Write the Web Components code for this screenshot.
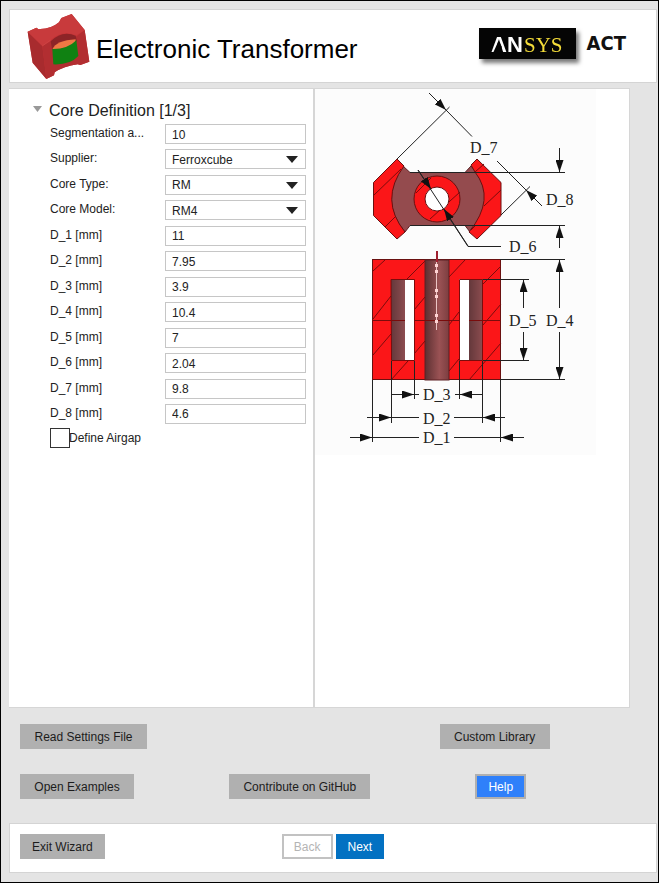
<!DOCTYPE html>
<html lang="en">
<head>
<meta charset="utf-8">
<title>Electronic Transformer</title>
<style>
html, body { margin: 0; }
body { font-family: "Liberation Sans", Arial, sans-serif; font-size: 12px; color: #222; }
</style>
</head>
<body>
<wizard-app></wizard-app>
<script>
const define = (name, html, setup) => {
  const template = document.createElement('template');
  template.innerHTML = html;
  customElements.define(name, class extends HTMLElement {
    constructor() {
      super();
      this.attachShadow({ mode: 'open' }).append(template.content.cloneNode(true));
    }
    connectedCallback() { if (setup) setup(this, this.shadowRoot); }
  });
};

define('wizard-button', `
<style>
:host { display: inline-flex; }
button { flex: 1; height: 25px; padding: 0 10px; border: 2px solid #b0b0b0; background: #b0b0b0; color: #1c1c1c; font: inherit; line-height: 16px; white-space: nowrap; }
:host([kind="help"]) button { background: #2f80fa; color: #fff; }
:host([kind="next"]) button { background: #0371c2; border-color: #0371c2; color: #fff; }
:host([kind="back"]) button { background: #fff; border-color: #c2c2c2; color: #b4b4b4; }
</style>
<button type="button"><slot></slot></button>`, (host, root) => {
  root.querySelector('button').disabled = host.hasAttribute('disabled');
});

define('core-logo', `
<style>:host { display: block; } svg { display: block; }</style>
<svg width="64" height="66" viewBox="20 12 192 198" aria-hidden="true">
<path fill="#c43437" d="M22 68 48 56 54 60Q90 62 116 40L123 27 154 15 193 63 207 158 180 168 172 166Q130 172 103 190L101 199 78 210 37 161Z"/>
<path fill="#a82b2e" d="M22 68 66 111 78 210 37 161Z"/>
<path fill="#b22e31" d="M66 111 92 97Q130 60 166 84L193 63 207 158 180 168 172 166Q130 172 103 190L101 199 78 210Z"/>
<path fill="#c83a3c" d="M22 68 48 56 54 60Q90 62 116 40L123 27 154 15 193 63 168 79Q124 62 91 93L66 111Z"/>
<path fill="#8c2427" d="M91 97Q126 63 166 80L170 97 96 124Z"/>
<path fill="#ee7844" d="M96 121Q108 94 166 91Q169 105 135 116Q113 123 96 121Z"/>
<path fill="#108112" d="M96 120Q142 121 168 94L174 141Q150 168 99 166Z"/>
<path fill="none" stroke="#d04a48" stroke-width="2" d="M66 111 91 93"/>
</svg>`);

define('vendor-logo', `
<style>
:host { display: flex; align-items: center; gap: 11px; }
svg { display: block; filter: drop-shadow(3px 4px 2px #0008); }
.word { font: bold 22px "Liberation Sans", sans-serif; fill: #fff; }
.tail { font: 21px "Liberation Serif", serif; fill: #f4dc39; }
b { font: bold 20px "DejaVu Sans Condensed", sans-serif; color: #111; }
</style>
<svg width="97" height="31" viewBox="0 0 97 31">
<rect width="97" height="31" fill="#050505"/>
<text class="word" x="12" y="24">AN</text>
<path d="M19.500 13 14 25H21.500L23 19Z" fill="#050505"/>
<text class="tail" x="45" y="24">SYS</text>
</svg>
<b>ACT</b>`);

define('page-header', `
<style>
:host { display: flex; align-items: center; gap: 5px; padding: 3px 30px 3px 17px; background: #fff; border: 1px solid #d4d4d4; }
h1 { flex: 1; margin: 0; padding-top: 6px; font-size: 26px; font-weight: 400; line-height: 30px; color: #000; white-space: nowrap; }
vendor-logo { padding-bottom: 6px; }
</style>
<core-logo></core-logo><h1><slot></slot></h1><vendor-logo></vendor-logo>`);

define('form-field', `
<style>
:host { display: grid; grid-template-columns: 115px 1fr; align-items: center; }
label { line-height: 16px; padding-bottom: 2px; white-space: nowrap; }
.box { display: grid; position: relative; min-width: 0; }
input, select { box-sizing: border-box; width: 100%; height: 20px; margin: 0; padding: 1px 6px 0; border: 1px solid #c6c6c6; border-radius: 0; background: #fff; color: #222; font: inherit; appearance: none; }
svg { position: absolute; right: 8px; top: 7px; pointer-events: none; }
</style>
<label for="control"></label><div class="box"></div>`, (host, root) => {
  root.querySelector('label').textContent = host.getAttribute('label');
  const value = host.getAttribute('value');
  root.querySelector('.box').innerHTML = host.hasAttribute('choice')
    ? `<select id="control"><option>${value}</option></select><svg width="12" height="7" viewBox="0 0 12 7"><path d="M0 0H12L6 7Z" fill="#222"/></svg>`
    : `<input id="control" type="text" value="${value}">`;
});

define('check-field', `
<style>
:host { display: flex; align-items: center; }
input { appearance: none; box-sizing: border-box; width: 20px; height: 20px; margin: 0; border: 1px solid #333; background: #fff; }
input:checked { background: #0371c2; }
label { margin-left: -1px; line-height: 16px; }
</style>
<input type="checkbox" id="check"><label for="check"><slot></slot></label>`);

define('core-form', `
<style>
:host { display: block; padding: 12px 7px 0 23px; background: #fff; }
.title { display: flex; align-items: center; gap: 6px; }
h2 { margin: 0; font-size: 16px; font-weight: 400; line-height: 20px; white-space: nowrap; }
.toggle { display: flex; width: 11px; height: 20px; padding: 5px 1px 0; border: 0; background: none; }
.fields { display: flex; flex-direction: column; justify-content: space-between; min-height: 300px; padding: 3px 0 4px 18px; }
check-field { padding-left: 18px; }
</style>
<div class="title"><button class="toggle" type="button" aria-label="Collapse"><svg width="9" height="6" viewBox="0 0 9 6"><path d="M0 0H9L4.500 6Z" fill="#999"/></svg></button><h2>Core Definition [1/3]</h2></div>
<div class="fields">
<form-field label="Segmentation a..." value="10"></form-field>
<form-field label="Supplier:" value="Ferroxcube" choice></form-field>
<form-field label="Core Type:" value="RM" choice></form-field>
<form-field label="Core Model:" value="RM4" choice></form-field>
<form-field label="D_1 [mm]" value="11"></form-field>
<form-field label="D_2 [mm]" value="7.95"></form-field>
<form-field label="D_3 [mm]" value="3.9"></form-field>
<form-field label="D_4 [mm]" value="10.4"></form-field>
<form-field label="D_5 [mm]" value="7"></form-field>
<form-field label="D_6 [mm]" value="2.04"></form-field>
<form-field label="D_7 [mm]" value="9.8"></form-field>
<form-field label="D_8 [mm]" value="4.6"></form-field>
</div>
<check-field>Define Airgap</check-field>`);

define('core-diagram', `
<style>
:host { display: block; background: #fff; }
svg { display: block; width: 281px; max-width: 100%; background: #fcfcfc; }
text { font: 16px "Liberation Serif", "Times New Roman", serif; fill: #222; }
.cut { fill: #fb1618; stroke: #6a1010; }
.hatch { fill: none; stroke: #7a0c0c; }
.back { fill: #944b4e; stroke: #5c2024; }
.dim { fill: none; stroke: #222; }
</style>
<svg viewBox="315 89 281 366" role="img" aria-label="Core dimensions">
<defs>
<marker id="tip" viewBox="0 0 12 8" refX="12" refY="4" markerWidth="12" markerHeight="8" orient="auto-start-reverse" markerUnits="userSpaceOnUse"><path d="M0 0 12 4 0 8Z" fill="#111"/></marker>
<linearGradient id="bore"><stop offset="0" stop-color="#5c3032"/><stop offset=".6" stop-color="#9a5254"/><stop offset="1" stop-color="#7c3e40"/></linearGradient>
<linearGradient id="wall"><stop offset="0" stop-color="#64383b"/><stop offset="1" stop-color="#8d4d50"/></linearGradient>
</defs>
<path class="back" d="M403 166 410 172.500H465L471 166Q500 199 470 232L465 225.500H410L405 232Q378 199 403 166Z"/>
<path class="cut" d="M397 159 373.500 182.500V215.500L397 239 405 232Q379 200 404 166Z"/>
<path class="cut" d="M477 159 501 182.500V215.500L477 239 469 232Q496 199 475 172L471 165Z"/>
<path class="hatch" d="M374 195 401 169M385 227 395 217M475 172 484 164M484 206 501 190M471 230 475 226"/>
<circle class="cut" cx="437" cy="199" r="23"/>
<path class="hatch" d="M416 193 431 178M430 219 460 192"/>
<circle cx="437" cy="199" r="12" fill="#fff" stroke="#6a1010"/>
<g class="dim">
<path d="M397 159 449.500 107M446 110 472 136.500M497 161 526 190M501 215 530 186.500M410 172.500H565M410 225.500H565M418 170 468 246.500H501"/>
<path marker-end="url(#tip)" d="M429 93 446 110"/><path marker-end="url(#tip)" d="M542 206 526 190"/>
<path marker-end="url(#tip)" d="M559.500 148V172"/><path marker-end="url(#tip)" d="M559.500 248V226"/>
<path marker-end="url(#tip)" d="M418 170 431 189"/><path marker-end="url(#tip)" d="M468 246 444 209"/>
</g>
<rect class="cut" x="372.500" y="259.500" width="128" height="120"/>
<rect x="425" y="260" width="24" height="120" fill="url(#bore)" stroke="#5c2024"/>
<path class="hatch" d="M373 271 385 260M406 280 425 261M373 319 391 296M373 355 391 334M391 380 408 361M414 310 425 297M414 354 425 341M449 277 465 260M449 325 459 312M449 371 459 359M483 284 501 266M483 325 501 304M469 380 501 343"/>
<path fill="url(#wall)" d="M391 279H405V360H391Z"/><path fill="url(#wall)" d="M469 279H483V360H469Z"/>
<path fill="#fff" d="M405 279H414V360H405ZM459 279H469V360H459Z"/>
<path class="hatch" d="M391 279.500H414.500V360.500H391.500ZM459.500 279.500H482.500V360.500H459.500ZM372 320.500H405M414 320.500H459M469 320.500H501"/>
<path stroke="#a02030" stroke-width="2" d="M437 251V262"/>
<path stroke="#ecc5c5" d="M436.500 262V330"/><path stroke="#ffd3d3" stroke-width="3" stroke-dasharray="3 3 3 16" d="M436.500 264V325"/>
<g class="dim">
<path d="M372.500 380V442M391.500 361V423M414.500 361V399M459.500 361V399M482.500 361V423M500.500 380V442M500 259.500H565M500 379.500H565M483 279.500H529M483 360.500H529M414 394.500H419M455 394.500H459M391 417.500H419M454 417.500H483M373 437.500H419M454 437.500H501"/>
<path marker-end="url(#tip)" d="M391 394.500H414"/><path marker-end="url(#tip)" d="M483 394.500H460"/>
<path marker-end="url(#tip)" d="M367 417.500H391"/><path marker-end="url(#tip)" d="M505 417.500H483"/>
<path marker-end="url(#tip)" d="M350 437.500H372"/><path marker-end="url(#tip)" d="M524 437.500H501"/>
<path marker-end="url(#tip)" d="M523.500 308V280"/><path marker-end="url(#tip)" d="M523.500 332V360"/>
<path marker-end="url(#tip)" d="M559.500 308V260"/><path marker-end="url(#tip)" d="M559.500 332V379"/>
</g>
<text x="470" y="153">D_7</text><text x="546" y="205">D_8</text><text x="509" y="252">D_6</text>
<text x="509" y="326">D_5</text><text x="546" y="326">D_4</text>
<text x="423" y="400">D_3</text><text x="423" y="424">D_2</text><text x="423" y="443">D_1</text>
</svg>`);

define('action-bar', `
<style>
:host { display: grid; grid-template-columns: 209fr 210fr 122fr 95fr; row-gap: 25px; justify-items: start; }
.read, .open { grid-column: 1; }
.git { grid-column: 2; }
.wide, .help { grid-column: 3; }
.read { min-width: 127px; } .wide { min-width: 110px; } .open { min-width: 114px; } .git { min-width: 141px; }
.help { min-width: 51px; justify-self: center; }
</style>
<wizard-button class="read">Read Settings File</wizard-button>
<wizard-button class="wide">Custom Library</wizard-button>
<wizard-button class="open">Open Examples</wizard-button>
<wizard-button class="git">Contribute on GitHub</wizard-button>
<wizard-button class="help" kind="help">Help</wizard-button>`);

define('wizard-footer', `
<style>
:host { display: grid; grid-template-columns: 1fr auto 1fr; padding: 10px 10px 13px; background: #fff; border: 1px solid #d4d4d4; }
.exit { justify-self: start; }
nav { display: flex; gap: 3px; }
</style>
<wizard-button class="exit">Exit Wizard</wizard-button>
<nav><wizard-button kind="back" disabled>Back</wizard-button><wizard-button kind="next">Next</wizard-button></nav>`);

define('wizard-app', `
<style>
:host { display: flex; flex-direction: column; box-sizing: border-box; min-height: 100vh; padding: 8px 1px 9px 8px; border: 1px solid #000; background: #e4e4e4; }
main { flex: 1; display: grid; grid-template-columns: 304fr 314fr; column-gap: 2px; margin: 5px 27px 0 0; background: #d6d6d6; border: solid #d6d6d6; border-width: 1px 1px 1px 0; }
action-bar { margin: 16px 0 24px 11px; }
</style>
<page-header>Electronic Transformer</page-header>
<main><core-form></core-form><core-diagram></core-diagram></main>
<action-bar></action-bar>
<wizard-footer></wizard-footer>`);
</script>
</body>
</html>
